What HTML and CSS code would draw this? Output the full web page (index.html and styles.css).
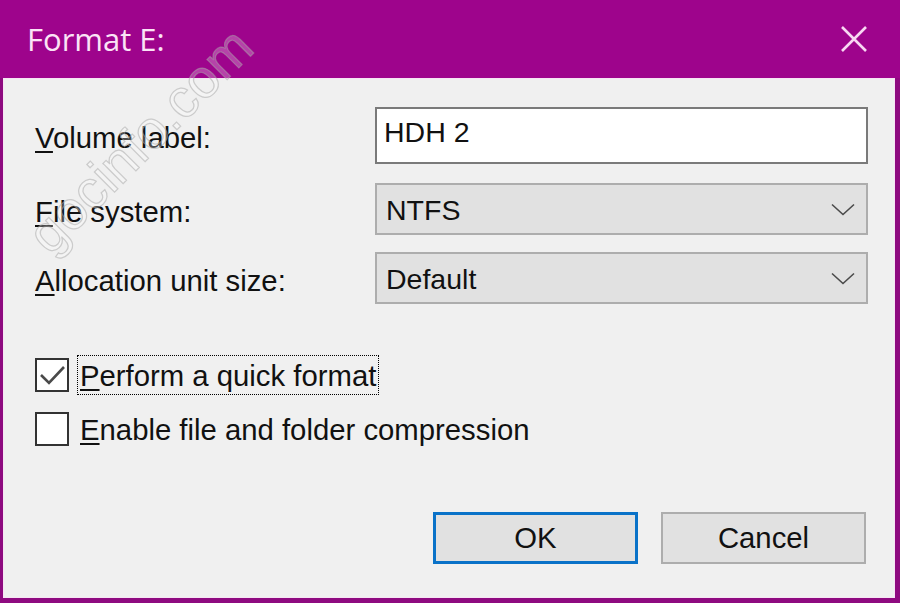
FILE: index.html
```html
<!DOCTYPE html>
<html>
<head>
<meta charset="utf-8">
<link rel="stylesheet" href="styles.css">
</head>
<body>
<div class="window">
  <div class="titlebar">
    <span class="title">Format E:</span>
    <svg class="close" width="28" height="26" viewBox="0 0 28 26"><path d="M2 1 L26 25 M26 1 L2 25" stroke="#f8d8f2" stroke-width="2.6" fill="none"/></svg>
  </div>
  <div class="client">
    <div class="form">
      <div class="row row-vol">
        <label class="lbl"><u>V</u>olume label:</label>
        <div class="textbox">HDH 2</div>
      </div>
      <div class="row row-fs">
        <label class="lbl"><u>F</u>ile system:</label>
        <div class="combo"><span>NTFS</span><svg class="chev" width="24" height="13" viewBox="0 0 24 13"><path d="M1 1.5 L12 11.5 L23 1.5" stroke="#4a4a4a" stroke-width="1.6" fill="none"/></svg></div>
      </div>
      <div class="row row-au">
        <label class="lbl"><u>A</u>llocation unit size:</label>
        <div class="combo"><span>Default</span><svg class="chev" width="24" height="13" viewBox="0 0 24 13"><path d="M1 1.5 L12 11.5 L23 1.5" stroke="#4a4a4a" stroke-width="1.6" fill="none"/></svg></div>
      </div>
    </div>
    <div class="checks">
      <div class="check">
        <span class="box"><svg width="30" height="30" viewBox="0 0 30 30"><path d="M4 15 L12 23 L27 7" stroke="#4a4a4a" stroke-width="2.6" fill="none"/></svg></span>
        <span class="focus"><u>P</u>erform a quick format</span>
      </div>
      <div class="check">
        <span class="box"></span>
        <span class="ctext"><u>E</u>nable file and folder compression</span>
      </div>
    </div>
    <div class="buttons">
      <div class="btn btn-default">OK</div>
      <div class="btn">Cancel</div>
    </div>
  </div>
  <div class="watermark">gocinfo.com</div>
</div>
</body>
</html>
```
FILE: styles.css
```css
html, body {
  margin: 0;
  padding: 0;
}
body {
  width: 900px;
  height: 603px;
  overflow: hidden;
  background: #8e0a80;
  font-family: "Liberation Sans", Arial, sans-serif;
  color: #111;
}
.window {
  height: 603px;
  display: flex;
  flex-direction: column;
  position: relative;
}
.titlebar {
  height: 78px;
  flex: none;
  background: #9e048c;
  display: flex;
  align-items: center;
  justify-content: space-between;
  padding: 0 32px 0 27px;
  box-sizing: border-box;
}
.title {
  font-family: "Open Sans", "Noto Sans", sans-serif;
  font-size: 31px;
  font-weight: 500;
  color: #fbe3f6;
}
.close {
  display: block;
}
.client {
  flex: 1;
  margin: 0 5px 5px 3px;
  background: #f0f0f0;
  box-shadow: inset 1px 1px 0 #f7e4f4, inset -1px -1px 0 #f7e4f4;
  padding: 29px 27px 0 31px;
  box-sizing: border-box;
  display: flex;
  flex-direction: column;
}
.form {
  display: flex;
  flex-direction: column;
}
.row {
  display: grid;
  grid-template-columns: 341px 1fr;
  align-items: center;
}
.row-fs {
  margin-top: 19px;
}
.row-au {
  margin-top: 17px;
}
.lbl {
  font-size: 29.3px;
  line-height: 34px;
  padding: 5px 0 0 1px;
}
u {
  text-decoration: underline;
  text-underline-offset: 3px;
  text-decoration-thickness: 2px;
}
.textbox {
  height: 57px;
  box-sizing: border-box;
  border: 2px solid #7a7a7a;
  background: #fff;
  font-size: 28.5px;
  padding: 0 0 7px 7px;
  display: flex;
  align-items: center;
}
.combo {
  height: 52px;
  box-sizing: border-box;
  border: 2px solid #adadad;
  background: #e1e1e1;
  font-size: 28.5px;
  display: flex;
  align-items: center;
  justify-content: space-between;
  padding: 3px 11px 0 9px;
}
.chev {
  display: block;
  margin-top: -2px;
}
.checks {
  margin-top: 54px;
  display: flex;
  flex-direction: column;
  gap: 20px;
}
.check {
  display: flex;
  align-items: center;
  height: 34px;
  font-size: 29.3px;
}
.box {
  width: 34px;
  height: 34px;
  box-sizing: border-box;
  border: 2px solid #333;
  background: #fff;
  margin-left: 1px;
  display: flex;
  align-items: center;
  justify-content: center;
}
.box svg {
  display: block;
}
.focus {
  margin-left: 8px;
  height: 40px;
  box-sizing: border-box;
  border: 1px dotted #000;
  padding: 2px 2px 0;
  display: flex;
  align-items: center;
}
.ctext {
  margin-left: 11px;
  padding-top: 2px;
}
.buttons {
  margin-top: 66px;
  display: flex;
  justify-content: flex-end;
  gap: 23px;
  padding-right: 2px;
}
.btn {
  width: 205px;
  height: 52px;
  box-sizing: border-box;
  border: 2px solid #adadad;
  background: #e1e1e1;
  font-size: 29.3px;
  display: flex;
  align-items: center;
  justify-content: center;
}
.btn-default {
  border: 3px solid #0a72c8;
}
.watermark {
  position: absolute;
  left: 56px;
  top: 208px;
  font-size: 54px;
  line-height: 54px;
  font-family: "Liberation Sans", Arial, sans-serif;
  color: rgba(255, 255, 255, 0.25);
  -webkit-text-stroke: 1.2px rgba(165, 165, 165, 0.5);
  transform: rotate(-45deg);
  transform-origin: 0 100%;
  white-space: nowrap;
  pointer-events: none;
}
```
